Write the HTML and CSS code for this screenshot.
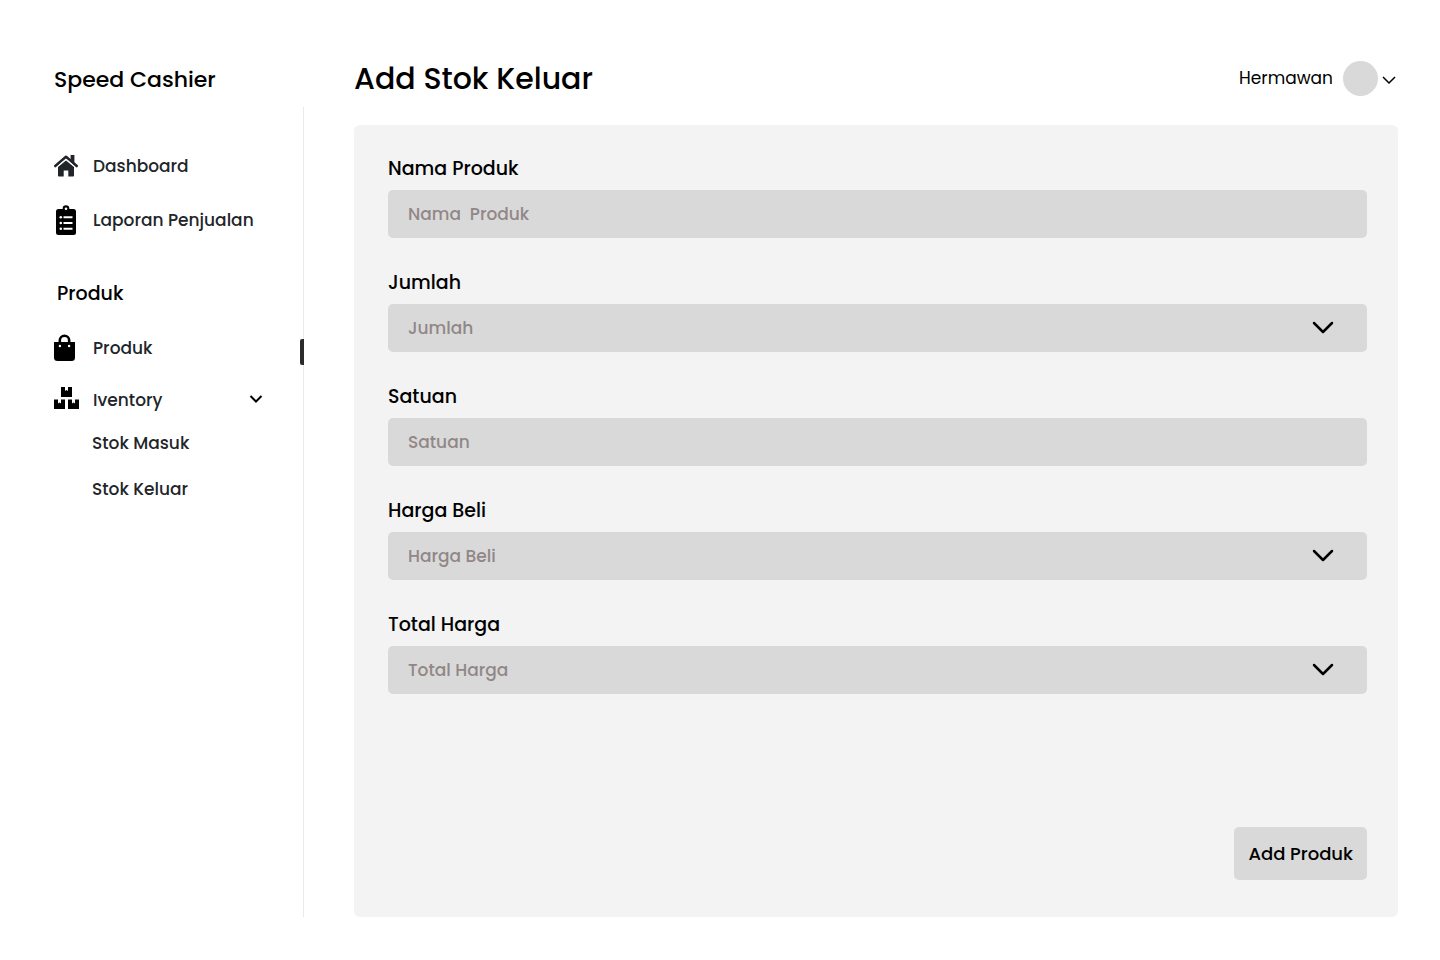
FILE: index.html
```html
<!DOCTYPE html>
<html lang="id">
<head>
<meta charset="utf-8">
<meta name="viewport" content="width=device-width, initial-scale=1">
<title>Add Stok Keluar - Speed Cashier</title>
<link rel="stylesheet" href="styles.css">
</head>
<body>
<div class="app">
  <aside class="sidebar">
    <div class="brand">Speed Cashier</div>
    <nav class="nav">
      <a class="nav-item" href="#"><span class="nav-icon"><svg width="24" height="22" viewBox="0 0 24 22" fill="#212529"><path d="M12 5.400 4 12v8.700c0 .5.300.8.800.8h4.900v-6h4.600v6h4.900c.5 0 .8-.3.800-.8V12z"/><path d="M16.600 0h3.800v8.500l-3.800-3z"/><path d="M1.300 11 12 1.800 22.700 11" fill="none" stroke="#212529" stroke-width="2.600" stroke-linecap="round" stroke-linejoin="round"/><path d="M2.500 12.300 12 4.100l9.500 8.200" fill="none" stroke="#fff" stroke-width="0.900"/></svg></span>Dashboard</a>
      <a class="nav-item" href="#"><span class="nav-icon"><svg width="24" height="30" viewBox="0 0 24 30"><path d="M4.500 4h15A2.500 2.500 0 0 1 22 6.500v21a2.500 2.500 0 0 1-2.500 2.500h-15A2.500 2.500 0 0 1 2 27.500v-21A2.500 2.500 0 0 1 4.500 4z"/><circle cx="12" cy="3.500" r="3.300"/><circle cx="12" cy="3.700" r="1.300" fill="#fff"/><g fill="#fff"><circle cx="6.800" cy="12.300" r="1.300"/><circle cx="6.800" cy="18" r="1.300"/><circle cx="6.800" cy="23.700" r="1.300"/><path d="M9.500 11.300h9v2h-9zM9.500 17h9v2h-9zM9.500 22.700h9v2h-9z"/></g></svg></span>Laporan Penjualan</a>
      <h2 class="nav-heading">Produk</h2>
      <a class="nav-item nav-item-active" href="#"><span class="nav-icon"><svg width="22" height="28" viewBox="0 0 22 28"><path d="M0 8h21v15.500a3.500 3.500 0 0 1-3.500 3.500h-14A3.500 3.500 0 0 1 0 23.500z"/><path d="M5.800 9V6.500a4.700 4.700 0 0 1 9.400 0V9" fill="none" stroke="#000" stroke-width="2.600"/><circle cx="5.900" cy="12" r="1.200" fill="#fff"/><circle cx="15.100" cy="12" r="1.200" fill="#fff"/></svg></span>Produk</a>
      <button class="nav-item nav-toggle" type="button" aria-expanded="true"><span class="nav-icon"><svg width="26" height="26" viewBox="0 0 26 26"><path d="M7 0h4v4l1.500-1L14 4V0h4v10H7zM0 12.500h4v4l1.500-1 1.500 1v-4h4V22H0zM14 12.500h4v4l1.500-1 1.500 1v-4h4V22H14z"/></svg></span>Iventory<svg class="nav-chevron" width="14" height="12" viewBox="0 0 14 12" fill="none" stroke="#000" stroke-width="2"><path d="m1.500 2 5.500 5.500L12.500 2"/></svg></button>
      <a class="nav-sub" href="#">Stok Masuk</a>
      <a class="nav-sub" href="#">Stok Keluar</a>
    </nav>
  </aside>
  <main class="main">
    <header class="topbar">
      <h1 class="title">Add Stok Keluar</h1>
      <button class="user" type="button">Hermawan<span class="avatar"></span><svg width="14" height="14" viewBox="0 0 14 14" fill="none" stroke="#000" stroke-width="1.500"><path d="m1 6 6 6 6-6"/></svg></button>
    </header>
    <form class="panel">
      <div class="field">
        <label class="label" for="nama">Nama Produk</label>
        <input class="control" id="nama" type="text" placeholder="Nama  Produk">
      </div>
      <div class="field">
        <label class="label" for="jumlah">Jumlah</label>
        <div class="select-wrap"><select class="control" id="jumlah"><option>Jumlah</option></select><svg class="chevron" width="22" height="14" viewBox="0 0 22 14"><path d="m2 2 9 9 9-9"/></svg></div>
      </div>
      <div class="field">
        <label class="label" for="satuan">Satuan</label>
        <input class="control" id="satuan" type="text" placeholder="Satuan">
      </div>
      <div class="field">
        <label class="label" for="harga">Harga Beli</label>
        <div class="select-wrap"><select class="control" id="harga"><option>Harga Beli</option></select><svg class="chevron" width="22" height="14" viewBox="0 0 22 14"><path d="m2 2 9 9 9-9"/></svg></div>
      </div>
      <div class="field">
        <label class="label" for="total">Total Harga</label>
        <div class="select-wrap"><select class="control" id="total"><option>Total Harga</option></select><svg class="chevron" width="22" height="14" viewBox="0 0 22 14"><path d="m2 2 9 9 9-9"/></svg></div>
      </div>
      <button class="submit" type="submit">Add Produk</button>
    </form>
  </main>
</div>
</body>
</html>
```
FILE: styles.css
```css
* { box-sizing: border-box; }
body, h1, h2 { margin: 0; }
body, button, input, select { font-family: Poppins, Inter, sans-serif; }
body { background: #fff; color: #000; }
svg { display: block; flex: none; }
a { color: inherit; text-decoration: none; }
button { border: 0; padding: 0; background: none; color: inherit; cursor: pointer; }

.app { display: flex; min-height: 100vh; padding-bottom: 43px; }
.sidebar { flex: none; width: 304px; display: flex; flex-direction: column; }
.brand { height: 107px; padding: 65px 0 0 54px; font-size: 22px; line-height: 30px; font-weight: 500; }
.nav { flex: 1; display: flex; flex-direction: column; padding: 44px 0 0 54px; border-right: 1px solid #e6ebf1; }
.nav-item { position: relative; display: flex; align-items: center; height: 30px; margin-bottom: 24px; font-size: 17px; font-weight: 500; color: #212529; text-align: left; }
.nav-icon { width: 39px; flex: none; }
.nav-heading { margin: 20px 0 24px 3px; font-size: 19px; line-height: 30px; font-weight: 500; }
.nav-item-active { margin-bottom: 22px; }
.nav-item-active::after { content: ""; position: absolute; right: -1px; top: 6px; width: 4px; height: 26px; border-radius: 2px 0 0 2px; background: #2b2b2b; }
.nav-toggle { margin-bottom: 13px; padding-right: 40px; }
.nav-chevron { margin-left: auto; }
.nav-sub { margin: 0 0 16px 38px; font-size: 17px; line-height: 30px; font-weight: 500; color: #212529; }

.main { flex: 1; min-width: 0; display: flex; flex-direction: column; padding: 0 42px 0 50px; }
.topbar { height: 125px; padding-top: 56px; display: flex; justify-content: space-between; align-items: flex-start; }
.title { font-size: 30px; line-height: 46px; font-weight: 500; }
.user { display: flex; align-items: center; height: 44px; gap: 10px; padding-right: 2px; font-size: 17px; }
.avatar { width: 35px; height: 35px; margin-right: -6px; border-radius: 50%; background: #d9d9d9; }

.panel { flex: 1; display: flex; flex-direction: column; gap: 31px; padding: 30px 31px 37px 34px; border-radius: 6px; background: #f3f3f3; }
.field { display: flex; flex-direction: column; gap: 7px; }
.label { font-size: 19px; line-height: 28px; font-weight: 500; }
.control { appearance: none; width: 100%; height: 48px; padding: 0 20px; border: 0; border-radius: 5px; background: #d9d9d9; color: #918787; font-size: 17px; font-weight: 500; }
.control::placeholder { color: #918787; opacity: 1; }
.select-wrap { position: relative; }
.chevron { position: absolute; right: 33px; top: 17px; fill: none; stroke: #000; stroke-width: 2.500; stroke-linecap: round; stroke-linejoin: round; pointer-events: none; }
.submit { align-self: flex-end; height: 53px; margin-top: auto; padding: 0 14px; border-radius: 5px; background: #d9d9d9; font-size: 18px; font-weight: 500; }
```
